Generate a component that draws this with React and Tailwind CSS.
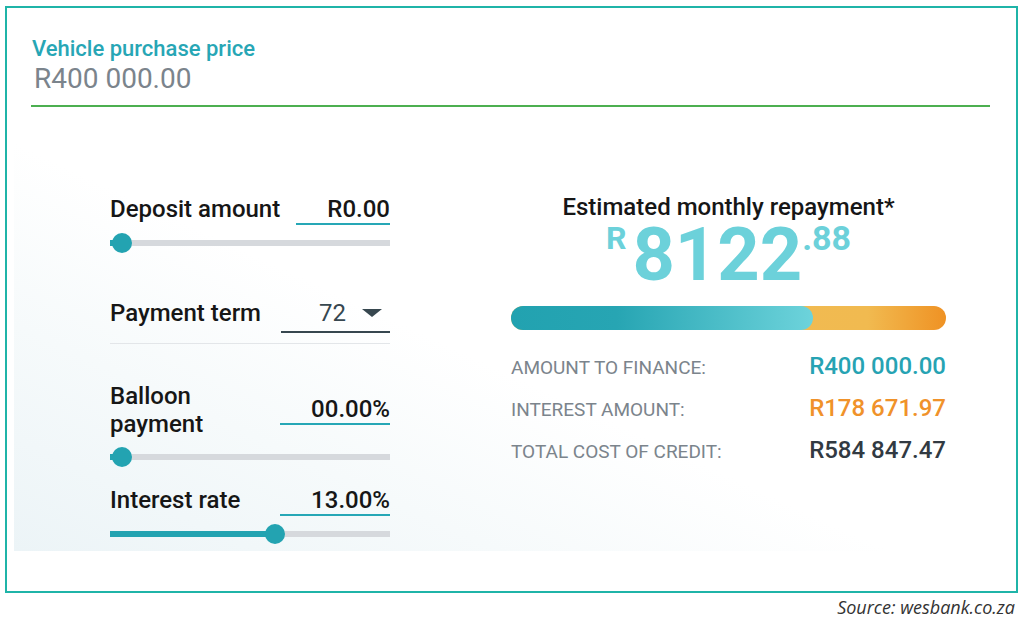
import React from "react";

const Slider = ({ fill }) => (
  <div className="flex items-center h-[20px]">
    <div
      className="h-[6px] bg-[#23a3b1]"
      style={{ width: fill }}
    />
    <div className="w-[20px] h-[20px] rounded-full bg-[#23a3b1] shrink-0 -mx-[4px] relative" />
    <div className="h-[6px] flex-1 bg-[#d6d9dd]" />
  </div>
);

const SummaryRow = ({ label, value, color }) => (
  <div className="flex items-baseline justify-between leading-[28px]">
    <span className="text-[19px] text-[#7b848c] uppercase">{label}</span>
    <span className={`text-[24px] font-medium ${color}`}>{value}</span>
  </div>
);

export default function App() {
  return (
    <div
      className="w-[1028px] h-[624px] bg-white pt-[6px] pl-[5px]"
      style={{ fontFamily: "Roboto, 'Liberation Sans', sans-serif" }}
    >
      <div className="w-[1013px] h-[587px] border-2 border-[#1fb4a8] pt-[28px]">
        <div className="pl-[25px]">
          <div className="text-[22px] leading-[25px] font-medium text-[#27a6b5]">
            Vehicle purchase price
          </div>
          <div className="mt-[2px] text-[28px] leading-[32px] text-[#7b848c] pl-[2px]">
            R400 000.00
          </div>
        </div>
        <div className="mt-[10px] ml-[24px] w-[959px] h-[2px] bg-[#4caf50]" />

        <div className="ml-[7px] w-[994px] h-[444px] flex bg-[linear-gradient(25deg,#ecf4f7_0%,#f6fafb_25%,#ffffff_45%)]">
          {/* left controls */}
          <div className="ml-[96px] w-[280px] pt-[88px] text-[#161616]">
            <div className="flex items-baseline justify-between leading-[28px]">
              <span className="text-[24px] font-medium">Deposit amount</span>
              <span className="w-[94px] text-right text-[24px] font-medium border-b-2 border-[#26a7b6]">
                R0.00
              </span>
            </div>
            <div className="mt-[8px]">
              <Slider fill={6} />
            </div>

            <div className="mt-[46px] flex items-baseline justify-between leading-[28px]">
              <span className="text-[24px] font-medium">Payment term</span>
              <span className="w-[109px] flex items-center justify-end pb-[4px] border-b-2 border-[#37474f] text-[24px] text-[#37474f]">
                <span>72</span>
                <svg width="20" height="9" viewBox="0 0 20 9" className="ml-[16px] mr-[8px]">
                  <path d="M0 0 L20 0 L10 8 Z" fill="#37474f" />
                </svg>
              </span>
            </div>
            <div className="mt-[10px] h-px bg-[#e3e6e9]" />

            <div className="mt-[38px] flex items-center justify-between leading-[28px]">
              <span className="w-[150px] text-[24px] font-medium">
                Balloon
                <br />
                payment
              </span>
              <span className="w-[110px] text-right text-[24px] font-medium border-b-2 border-[#26a7b6]">
                00.00%
              </span>
            </div>
            <div className="mt-[9px]">
              <Slider fill={6} />
            </div>

            <div className="mt-[19px] flex items-baseline justify-between leading-[28px]">
              <span className="text-[24px] font-medium">Interest rate</span>
              <span className="w-[110px] text-right text-[24px] font-medium border-b-2 border-[#26a7b6]">
                13.00%
              </span>
            </div>
            <div className="mt-[8px]">
              <Slider fill={159} />
            </div>
          </div>

          {/* right summary */}
          <div className="ml-[121px] w-[435px] pt-[86px]">
            <div className="text-center text-[24px] leading-[28px] font-medium text-[#161616]">
              Estimated monthly repayment*
            </div>
            <div className="flex justify-center items-start font-bold text-[#6cd1da] leading-none">
              <span className="text-[32px] mt-[1px] mr-[6px]">R</span>
              <span className="text-[74px] -mt-[3px]">8122</span>
              <span className="text-[34px]">.88</span>
            </div>
            <div className="mt-[14px] h-[24px] rounded-full bg-[linear-gradient(90deg,#f1bc55_0%,#f1ba50_82%,#ef9224_100%)]">
              <div className="w-[302px] h-full rounded-full bg-[linear-gradient(90deg,#22a2b0_0%,#27a5b3_35%,#6dd3db_100%)]" />
            </div>
            <div className="mt-[22px] flex flex-col gap-[12px]">
              <SummaryRow label="Amount to finance:" value="R400 000.00" color="text-[#26a3b3]" />
              <SummaryRow label="Interest amount:" value="R178 671.97" color="text-[#f0922a]" />
              <SummaryRow label="Total cost of credit:" value="R584 847.47" color="text-[#323a42]" />
            </div>
          </div>
        </div>
      </div>
      <div
        className="mt-[4px] pr-[13px] text-right text-[18px] leading-[20px] italic text-[#333333]"
        style={{ fontFamily: "'Open Sans', sans-serif" }}
      >
        Source: wesbank.co.za
      </div>
    </div>
  );
}
